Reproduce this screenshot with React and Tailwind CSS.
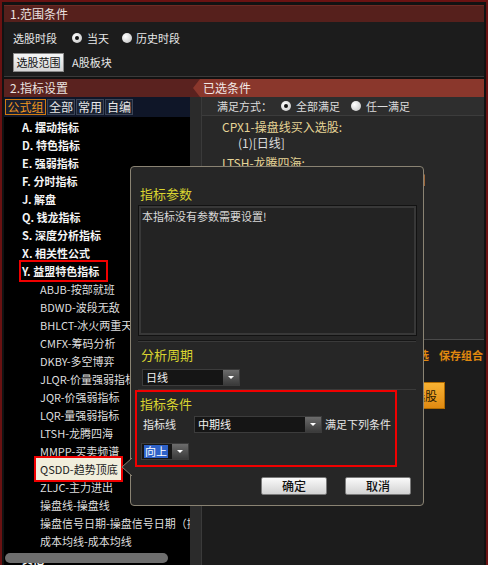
import React from 'react';

const topItems = [
  'A. 摆动指标',
  'D. 特色指标',
  'E. 强弱指标',
  'F. 分时指标',
  'J. 解盘',
  'Q. 钱龙指标',
  'S. 深度分析指标',
  'X. 相关性公式',
];

const subItems = [
  'ABJB-按部就班',
  'BDWD-波段无敌',
  'BHLCT-冰火两重天',
  'CMFX-筹码分析',
  'DKBY-多空博弈',
  'JLQR-价量强弱指标',
  'JQR-价强弱指标',
  'LQR-量强弱指标',
  'LTSH-龙腾四海',
  'MMPP-买卖频谱',
  'QSDD-趋势顶底',
  'ZLJC-主力进出',
  '操盘线-操盘线',
  '操盘信号日期-操盘信号日期（操盘线）',
  '成本均线-成本均线',
];

const Radio = ({ on }) => (
  <span className="w-[10px] h-[10px] rounded-full bg-[radial-gradient(circle_at_35%_35%,#ffffff,#bdbdbd)] flex items-center justify-center shrink-0">
    {on && <span className="w-[4px] h-[4px] rounded-full bg-[#111]" />}
  </span>
);

const Arrow = () => (
  <div className="w-[16px] h-full bg-linear-to-b from-[#6c6c6c] to-[#3a3a3a] flex items-center justify-center shrink-0">
    <span className="w-0 h-0 border-l-[3px] border-r-[3px] border-t-[3px] border-l-transparent border-r-transparent border-t-white" />
  </div>
);

const Select = ({ width, children }) => (
  <div className={`flex h-[17px] border border-[#3c3c3c] bg-[#151515] shrink-0 ${width}`}>
    <div className="flex-1 flex items-center pl-[3px] text-[#f0f0f0] overflow-hidden">{children}</div>
    <Arrow />
  </div>
);

const Title = ({ children, className = '' }) => (
  <div className={`h-[16px] leading-[16px] text-[13px] text-[#d9d430] ${className}`}>{children}</div>
);

const Dialog = () => (
  <div className="absolute left-[128px] top-[164px] w-[294px] h-[340px] border border-[#8a8373] rounded-[4px] bg-[#262626] flex flex-col text-[11px] text-[#e6e6e6]">
    <svg className="absolute left-[-10px] top-[291px]" width="11" height="18" viewBox="0 0 11 18">
      <polygon points="11,0 1,9 11,18" fill="#262626" />
      <polyline points="11,0 1,9 11,18" fill="none" stroke="#8a8373" strokeWidth="1" />
    </svg>

    <Title className="mt-[19px] pl-[9px]">指标参数</Title>
    <div className="mt-[3px] ml-[7px] w-[279px] h-[131px] border border-[#121212] bg-[#232323] shadow-[inset_0_0_0_2px_#383838] px-[3px] pt-[3px] text-[#d8d8d8] leading-[14px]">
      本指标没有参数需要设置!
    </div>
    <div className="mt-[4px] mx-[7px] h-[2px] border-t border-[#161616] border-b border-b-[#3a3a3a]" />

    <Title className="mt-[5px] pl-[10px]">分析周期</Title>
    <div className="mt-[6px] ml-[11px]">
      <Select width="w-[98px]">日线</Select>
    </div>
    <div className="mt-[3px] mx-[7px] h-px bg-[#3a3a3a]" />

    <div className="ml-[4px] w-[262px] h-[77px] border-2 border-[#f00000] flex flex-col">
      <Title className="mt-[4px] pl-[3px]">指标条件</Title>
      <div className="mt-[4px] pl-[6px] flex items-center h-[17px]">
        <span className="w-[51px]">指标线</span>
        <Select width="w-[128px]">中期线</Select>
        <span className="ml-[3px]">满足下列条件</span>
      </div>
      <div className="mt-[10px] ml-[4px]">
        <div className="flex h-[17px] w-[48px] border border-[#3c3c3c] bg-[#151515]">
          <div className="flex-1 flex items-center pl-[2px]">
            <span className="bg-[#2e62c8] text-white px-[1px] leading-[13px]">向上</span>
          </div>
          <Arrow />
        </div>
      </div>
    </div>

    <div className="mt-[10px] flex justify-end pr-[12px] gap-[18px]">
      {['确定', '取消'].map((t) => (
        <button
          key={t}
          className="w-[66px] h-[18px] rounded-[2px] border border-[#7a7a7a] bg-linear-to-b from-[#fafafa] to-[#d2d2d2] text-[#111] text-[12px] font-medium leading-[16px]"
        >
          {t}
        </button>
      ))}
    </div>
  </div>
);

export default function App() {
  return (
    <div className="relative w-[488px] h-[565px] overflow-hidden border-2 border-b-0 border-[#6a1212] bg-[#121212] pt-[3px] px-[2px] text-[11px] text-[#e8e8e8] [font-family:'Noto_Sans_CJK_SC','Liberation_Sans',sans-serif]">
      {/* 1. range */}
      <div className="h-[17px] bg-[#56201c] border-t border-[#6e2a24] flex items-center pl-[6px] text-[#ebe2e0] text-[12px]">
        1.范围条件
      </div>
      <div className="h-[55px] bg-[#1c1c1c] border-b border-[#3a3a3a] pl-[9px] pt-[8px] flex flex-col">
        <div className="h-[16px] flex items-center">
          <span>选股时段</span>
          <span className="ml-[15px]"><Radio on /></span>
          <span className="ml-[5px]">当天</span>
          <span className="ml-[13px]"><Radio /></span>
          <span className="ml-[4px]">历史时段</span>
        </div>
        <div className="mt-[7px] h-[19px] flex items-center">
          <button className="w-[51px] h-[19px] border border-[#8a8a8a] bg-linear-to-b from-[#f6f6f6] to-[#d6d6d6] text-[#111] text-[11px] leading-[17px]">
            选股范围
          </button>
          <span className="ml-[8px]">A股板块</span>
        </div>
      </div>

      {/* 2. indicator header */}
      <div className="mt-[2px] h-[18px] bg-[#5a221f] flex items-center">
        <div className="flex-1 pl-[6px] text-[12px] text-[#ebe2e0]">2.指标设置</div>
        <div className="w-[291px] h-full bg-[#8a372c] [clip-path:polygon(7px_0,100%_0,100%_100%,7px_100%,0_50%)] flex items-center pl-[10px] text-[12px] text-[#f2e8e6]">
          已选条件
        </div>
      </div>

      {/* main */}
      <div className="flex h-[470px]">
        <div className="relative w-[186px] overflow-hidden flex flex-col bg-black">
          <div className="h-[20px] bg-[#0f1628] flex items-center gap-[1px] pl-[1px] shrink-0">
            <span className="w-[41px] h-[16px] border border-[#d07a12] bg-[#1a2030] text-[#f0961e] flex items-center justify-center text-[12px]">公式组</span>
            <span className="w-[28px] h-[16px] border border-[#3b4558] bg-[#1a2232] flex items-center justify-center text-[12px]">全部</span>
            <span className="w-[28px] h-[16px] border border-[#3b4558] bg-[#1a2232] flex items-center justify-center text-[12px]">常用</span>
            <span className="w-[28px] h-[16px] border border-[#3b4558] bg-[#1a2232] flex items-center justify-center text-[12px]">自编</span>
          </div>
          <div className="pt-[1px] flex flex-col whitespace-nowrap">
            {topItems.map((t) => (
              <div key={t} className="h-[18px] flex items-center pl-[18px] font-bold text-[#f4f4f4]">{t}</div>
            ))}
            <div className="h-[18px] flex items-center pl-[15px]">
              <span className="-my-[2px] h-[22px] border-2 border-[#f00000] pl-[1px] pr-[7px] flex items-center font-bold text-[#f4f4f4]">
                Y. 益盟特色指标
              </span>
            </div>
            {subItems.map((t) =>
              t.startsWith('QSDD') ? (
                <div key={t} className="h-[18px] flex items-center pl-[30px]">
                  <span className="-my-[4px] h-[26px] border-2 border-[#f00000] bg-[#f1eedc] text-[#1a1a1a] pl-[4px] pr-[3px] flex items-center">
                    {t}
                  </span>
                </div>
              ) : (
                <div key={t} className="h-[18px] flex items-center pl-[36px] text-[#dedede]">{t}</div>
              )
            )}
            <div className="h-[18px] flex items-center pl-[18px] font-bold text-[#f4f4f4]">其他</div>
          </div>
          <div className="absolute left-[1px] top-[456px] w-[163px] h-[10px] rounded-full bg-[#6e6e6e]" />
        </div>

        <div className="w-[11px] bg-[#2b2b2b]" />

        <div className="flex-1 flex flex-col border-l border-[#3a3a3a]">
          <div className="h-[19px] bg-[#2e2e2e] border-b border-[#3c3c3c] flex items-center pl-[15px] text-[#dcdcdc]">
            <span>满足方式：</span>
            <span className="ml-[9px]"><Radio on /></span>
            <span className="ml-[5px]">全部满足</span>
            <span className="ml-[11px]"><Radio /></span>
            <span className="ml-[5px]">任一满足</span>
          </div>
          <div className="h-[223px] bg-[#282828] pt-[3px] pl-[20px] flex flex-col whitespace-nowrap">
            <div className="h-[16px] leading-[16px] text-[12px] text-[#e6d596]">CPX1-操盘线买入选股:</div>
            <div className="h-[16px] leading-[16px] text-[12px] pl-[16px] text-[#dcdcdc]">(1)[日线]</div>
            <div className="mt-[4px] h-[16px] leading-[16px] text-[12px] text-[#e6d596]">LTSH-龙腾四海:</div>
            <div className="h-[16px] leading-[16px] text-[12px] pl-[16px] text-[#dcdcdc]">(1)[日线:中期线 满足下列条件 向上]</div>
          </div>
          <div className="flex-1 bg-[#1c1c1c] border-t border-[#4a4a4a] flex flex-col">
            <div className="pt-[8px] h-[22px] flex justify-end items-center gap-[10px] pr-[1px] text-[#e0880e] font-bold whitespace-nowrap">
              <span>删除条件</span>
              <span>智能优选</span>
              <span>保存组合</span>
            </div>
            <div className="mt-[20px] flex justify-end pr-[39px]">
              <button className="h-[27px] px-[7px] border border-[#b06a00] bg-linear-to-b from-[#f8b232] to-[#e08a10] text-[#2a1800] text-[12px]">
                执行选股
              </button>
            </div>
          </div>
        </div>
      </div>

      <Dialog />
    </div>
  );
}
